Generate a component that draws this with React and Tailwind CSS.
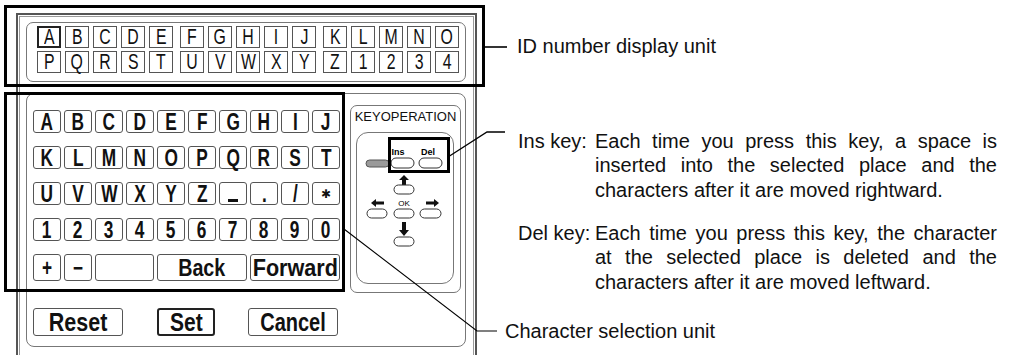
const TOP_ROWS = [
  [["A", "B", "C", "D", "E"], ["F", "G", "H", "I", "J"], ["K", "L", "M", "N", "O"]],
  [["P", "Q", "R", "S", "T"], ["U", "V", "W", "X", "Y"], ["Z", "1", "2", "3", "4"]],
];

const KEY_ROWS = [
  ["A", "B", "C", "D", "E", "F", "G", "H", "I", "J"],
  ["K", "L", "M", "N", "O", "P", "Q", "R", "S", "T"],
  ["U", "V", "W", "X", "Y", "Z", "_", ".", "/", "✱"],
  ["1", "2", "3", "4", "5", "6", "7", "8", "9", "0"],
];

function Cell({ ch, selected }) {
  return (
    <div
      className={`w-[24px] h-[22px] flex items-center justify-center text-[22px] leading-none ${
        selected ? "border-2 border-[#222]" : "border border-[#555]"
      }`}
    >
      <span className="inline-block scale-x-[0.72]">{ch}</span>
    </div>
  );
}

function Key({ ch, className = "" }) {
  let inner;
  if (ch === "✱") inner = <span className="text-[12px] font-['DejaVu_Sans',sans-serif]">✱</span>;
  else if (ch === "_") inner = <span className="mt-[14px] w-[10px] h-[3px] bg-[#111]" />;
  else inner = <span className="inline-block text-[24px] scale-x-[0.72]">{ch}</span>;
  return (
    <div
      className={`h-[23px] rounded-[3px] border border-[#555] flex items-center justify-center font-bold leading-none ${className}`}
    >
      {inner}
    </div>
  );
}

function Pill({ x, y, w = 22, h = 9 }) {
  return <rect x={x} y={y} width={w} height={h} rx={h / 2} fill="white" stroke="#333" strokeWidth="1" />;
}

function Keypad() {
  const ff = "Liberation Sans, Arial, sans-serif";
  return (
    <svg width="96" height="150" viewBox="0 0 96 150">
      <rect x="9" y="27" width="23" height="7" rx="3.5" fill="#9a9a9a" stroke="#555" />
      <text x="41" y="22" fontSize="9" fontWeight="bold" textAnchor="middle" fontFamily={ff}>Ins</text>
      <text x="71" y="22" fontSize="9" fontWeight="bold" textAnchor="middle" fontFamily={ff}>Del</text>
      <Pill x={34} y={25} w={23} h={10} />
      <Pill x={62} y={25} w={23} h={10} />
      {/* up */}
      <path d="M47 42 L52 47 L49 47 L49 52 L45 52 L45 47 L42 47 Z" fill="#111" />
      <Pill x={37} y={52} w={20} h={9} />
      {/* left */}
      <path d="M14 70 L19 66 L19 68.5 L27 68.5 L27 71.5 L19 71.5 L19 74 Z" fill="#111" />
      <Pill x={10} y={76} w={20} h={9} />
      <text x="47" y="73" fontSize="8" textAnchor="middle" fontFamily={ff}>OK</text>
      <Pill x={37} y={76} w={20} h={9} />
      {/* right */}
      <path d="M82 70 L77 66 L77 68.5 L69 68.5 L69 71.5 L77 71.5 L77 74 Z" fill="#111" />
      <Pill x={63} y={76} w={21} h={9} />
      {/* down */}
      <path d="M47 103 L52 97 L49 97 L49 89 L45 89 L45 97 L42 97 Z" fill="#111" />
      <Pill x={37} y={104} w={20} h={9} />
    </svg>
  );
}

function Callouts() {
  return (
    <svg className="absolute left-0 top-0 pointer-events-none" width="1013" height="355" viewBox="0 0 1013 355">
      <line x1="485" y1="47" x2="507" y2="47" stroke="#000" strokeWidth="1.6" />
      <rect x="389.5" y="138.5" width="59" height="33" fill="none" stroke="#000" strokeWidth="3" />
      <polyline points="448,157 487,132 505,132" fill="none" stroke="#000" strokeWidth="1.3" />
      <polyline points="344,229 477,331 497,331" fill="none" stroke="#000" strokeWidth="1.1" />
    </svg>
  );
}

export default function App() {
  return (
    <div className="relative flex w-[1013px] h-[355px] overflow-hidden bg-white text-[#111] font-['Liberation_Sans',Arial,sans-serif]">
      <div className="w-[490px] shrink-0 pl-[16px] pt-[13px]">
        <div className="w-[461px] h-[342px] border-x-2 border-t-2 border-[#555] px-px pt-px">
          <div className="h-full border-x border-t border-[#9a9a9a]">
            {/* ID number display unit */}
            <div className="-ml-[16px] -mt-[12px] w-[481px] h-[82px] border-[3px] border-black">
              <div className="ml-[19px] mt-[14px] w-[440px] h-[60px] rounded-[7px] border border-[#777] pl-[10px] pt-[3px] flex flex-col gap-[3px]">
                {TOP_ROWS.map((row, r) => (
                  <div key={r} className="flex gap-[7px]">
                    {row.map((group, g) => (
                      <div key={g} className="flex gap-[4px]">
                        {group.map((ch) => (
                          <Cell key={ch} ch={ch} selected={ch === "A"} />
                        ))}
                      </div>
                    ))}
                  </div>
                ))}
              </div>
            </div>

            {/* setting panel */}
            <div className="ml-[6px] mt-[6px] w-[440px] h-[254px] rounded-[8px] border border-[#777] flex items-start">
              <div className="w-[318px] shrink-0">
                <div className="-ml-[23px] -mt-[2px] w-[341px] h-[200px] border-[3px] border-black">
                  <div className="ml-[26px] mt-[15px] w-[307px] grid grid-cols-10 gap-x-[3px] gap-y-[13px]">
                    {KEY_ROWS.flat().map((ch, i) => (
                      <Key key={i} ch={ch} />
                    ))}
                    <Key ch="+" className="h-[27px]" />
                    <Key ch="−" className="h-[27px]" />
                    <Key ch="" className="h-[27px] col-span-2" />
                    <div className="col-span-3 h-[27px] rounded-[3px] border border-[#555] flex items-center justify-center font-bold leading-none">
                      <span className="inline-block text-[24px] scale-x-[0.82]">Back</span>
                    </div>
                    <div className="col-span-3 h-[27px] rounded-[3px] border border-[#555] flex items-center justify-center font-bold leading-none">
                      <span className="inline-block text-[24px] scale-x-[0.9]">Forward</span>
                    </div>
                  </div>
                </div>
                <div className="flex mt-[16px] ml-[6px] font-bold leading-none">
                  <div className="w-[90px] h-[28px] rounded-[3px] border border-[#555] flex items-center justify-center">
                    <span className="inline-block text-[25px] scale-x-[0.86]">Reset</span>
                  </div>
                  <div className="ml-[34px] w-[58px] h-[28px] rounded-[3px] border-2 border-[#222] flex items-center justify-center">
                    <span className="inline-block text-[25px] scale-x-[0.84]">Set</span>
                  </div>
                  <div className="ml-[33px] w-[90px] h-[28px] rounded-[3px] border border-[#555] flex items-center justify-center">
                    <span className="inline-block text-[25px] scale-x-[0.8]">Cancel</span>
                  </div>
                </div>
              </div>

              {/* key operation */}
              <div className="ml-[5px] mt-[11px] w-[111px] h-[188px] rounded-[7px] border border-[#777]">
                <div className="mt-[4px] text-center text-[13px] leading-[14px]">KEYOPERATION</div>
                <div className="ml-[5px] mt-[8px] w-[98px] h-[152px] rounded-[12px] border border-[#777]">
                  <Keypad />
                </div>
              </div>
            </div>
          </div>
        </div>
      </div>

      <div className="flex flex-col text-[20px] leading-[24.5px]">
        <div className="ml-[27px] mt-[34px]">ID number display unit</div>
        <div className="ml-[28px] mt-[70px] flex">
          <div className="w-[77px] shrink-0 whitespace-nowrap">Ins key:</div>
          <div className="w-[402px] text-justify">
            Each time you press this key, a space is inserted into the selected place and the characters after it are moved rightward.
          </div>
        </div>
        <div className="ml-[28px] mt-[18.5px] flex">
          <div className="w-[77px] shrink-0 whitespace-nowrap">Del key:</div>
          <div className="w-[402px] text-justify">
            Each time you press this key, the character at the selected place is deleted and the characters after it are moved leftward.
          </div>
        </div>
        <div className="ml-[15px] mt-[25px]">Character selection unit</div>
      </div>

      <Callouts />
    </div>
  );
}
